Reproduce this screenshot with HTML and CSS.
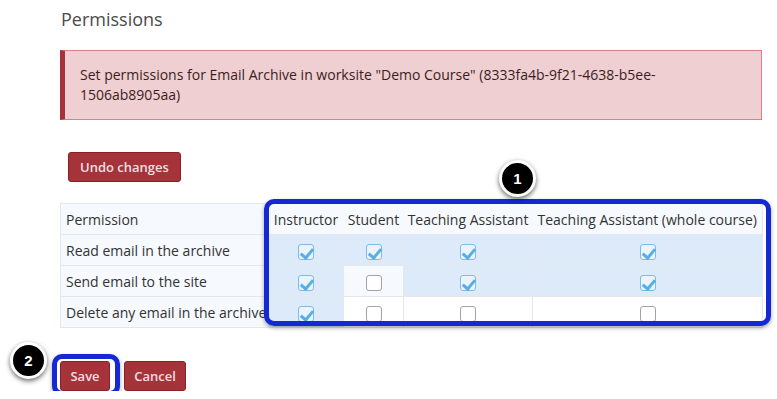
FILE: index.html
```html
<!DOCTYPE html>
<html lang="en">
<head>
    <meta charset="UTF-8">
    <title>Permissions</title>
    <link rel="stylesheet" href="styles.css">
</head>
<body>
    <div class="page">
        <h2 class="page-title">Permissions</h2>

        <div class="alert">
            Set permissions for Email Archive in worksite "Demo Course" (8333fa4b-9f21-4638-b5ee-1506ab8905aa)
        </div>

        <div class="undo-row">
            <button class="btn">Undo changes</button>
        </div>

        <div class="table-wrap">
            <table class="perm-table">
                <thead>
                    <tr>
                        <th class="col-perm">Permission</th>
                        <th class="col-instr">Instructor</th>
                        <th class="col-student">Student</th>
                        <th class="col-ta">Teaching Assistant</th>
                        <th class="col-tawc">Teaching Assistant (whole course)</th>
                    </tr>
                </thead>
                <tbody>
                    <tr>
                        <td class="perm-name">Read email in the archive</td>
                        <td class="on"><input type="checkbox" checked></td>
                        <td class="on"><input type="checkbox" checked></td>
                        <td class="on"><input type="checkbox" checked></td>
                        <td class="on"><input type="checkbox" checked></td>
                    </tr>
                    <tr class="alt">
                        <td class="perm-name">Send email to the site</td>
                        <td class="on"><input type="checkbox" checked></td>
                        <td><input type="checkbox"></td>
                        <td class="on"><input type="checkbox" checked></td>
                        <td class="on"><input type="checkbox" checked></td>
                    </tr>
                    <tr>
                        <td class="perm-name">Delete any email in the archive</td>
                        <td class="on"><input type="checkbox" checked></td>
                        <td><input type="checkbox"></td>
                        <td><input type="checkbox"></td>
                        <td><input type="checkbox"></td>
                    </tr>
                </tbody>
            </table>
            <div class="callout callout-roles"></div>
            <div class="badge badge-roles">1</div>
        </div>

        <div class="actions">
            <div class="save-wrap">
                <button class="btn btn-save">Save</button>
                <div class="callout callout-save"></div>
                <div class="badge badge-save">2</div>
            </div>
            <button class="btn btn-cancel">Cancel</button>
        </div>
    </div>
</body>
</html>
```

FILE: styles.css
```css
* {
    margin: 0;
    padding: 0;
    box-sizing: border-box;
}

body {
    font-family: 'Open Sans', 'Liberation Sans', sans-serif;
    background: #fff;
    color: #333;
    font-size: 14px;
}

.page {
    padding: 6px 15px 0 60px;
}

.page-title {
    font-size: 18px;
    font-weight: 400;
    color: #4a4a4a;
    line-height: 26px;
    padding-left: 1px;
}

.alert {
    margin-top: 18px;
    width: 702px;
    min-height: 68px;
    padding: 14px 20px 14px 15px;
    background: #efcfd1;
    border: 1px solid #dd8082;
    border-left: 5px solid #a6333a;
    color: #3a1d1f;
    line-height: 20px;
}

.undo-row {
    margin-top: 32px;
    padding-left: 8px;
    display: flex;
}

.btn {
    font-family: 'Open Sans', 'Liberation Sans', sans-serif;
    font-size: 13px;
    font-weight: 600;
    color: #f1dfe0;
    background: #a5333a;
    border: 1px solid #8c1f26;
    border-radius: 3px;
    height: 30px;
    padding: 0 11px;
    cursor: pointer;
}

.table-wrap {
    position: relative;
    margin-top: 21px;
    width: 702px;
}

.perm-table {
    width: 702px;
    border-collapse: collapse;
    border: 1px solid #e4e8ec;
    table-layout: fixed;
}

.perm-table th,
.perm-table td {
    height: 31px;
    font-weight: 400;
    border-top: 1px solid #e4e8ec;
    text-align: center;
    vertical-align: middle;
    white-space: nowrap;
}

.perm-table td + td {
    border-left: 1px solid #e4e8ec;
}

.perm-table thead tr,
.perm-table tr.alt {
    background: #f6f9fd;
}

.perm-table .col-perm,
.perm-table .perm-name {
    text-align: left;
    padding-left: 5px;
}

.perm-table .perm-name {
    background: #f6f9fd;
}

.col-perm { width: 208px; }
.col-instr { width: 75px; }
.col-student { width: 60px; }
.col-ta { width: 129px; }
.col-tawc { width: 230px; }

.perm-table td.on {
    background: #dceaf9;
}

.perm-table input[type="checkbox"] {
    appearance: none;
    -webkit-appearance: none;
    display: inline-block;
    width: 16px;
    height: 16px;
    margin-top: 3px;
    border: 1px solid #a3a3a3;
    border-radius: 3px;
    background: #fff;
    position: relative;
    vertical-align: middle;
}

.perm-table input[type="checkbox"]:checked {
    border-color: #7dbbe8;
    background: #eaf4fc;
}

.perm-table input[type="checkbox"]:checked::after {
    content: '';
    position: absolute;
    left: 4px;
    top: 1px;
    width: 5px;
    height: 10px;
    border-right: 3px solid #5aaee6;
    border-bottom: 3px solid #5aaee6;
    transform: rotate(40deg);
}

.callout {
    position: absolute;
    border: 5px solid #1428d4;
    border-radius: 10px;
    box-shadow: 0 2px 4px rgba(0, 0, 0, 0.35);
    pointer-events: none;
}

.callout-roles {
    left: 204px;
    top: -4px;
    width: 507px;
    height: 127px;
}

.badge {
    position: absolute;
    width: 37px;
    height: 37px;
    border-radius: 50%;
    background: #000;
    border: 3px solid #fff;
    box-shadow: 0 2px 5px rgba(0, 0, 0, 0.6);
    color: #fff;
    font-family: 'Liberation Sans', sans-serif;
    font-size: 15px;
    font-weight: 700;
    display: flex;
    align-items: center;
    justify-content: center;
}

.badge-roles {
    left: 439px;
    top: -43px;
}

.actions {
    margin-top: 33px;
    display: flex;
    gap: 14px;
}

.save-wrap {
    position: relative;
}

.btn-save {
    padding: 0;
    width: 50px;
}

.btn-cancel {
    width: 62px;
    padding: 0;
}

.callout-save {
    left: -8px;
    top: -7px;
    width: 68px;
    height: 42px;
}

.badge-save {
    left: -50px;
    top: -19px;
}
```
